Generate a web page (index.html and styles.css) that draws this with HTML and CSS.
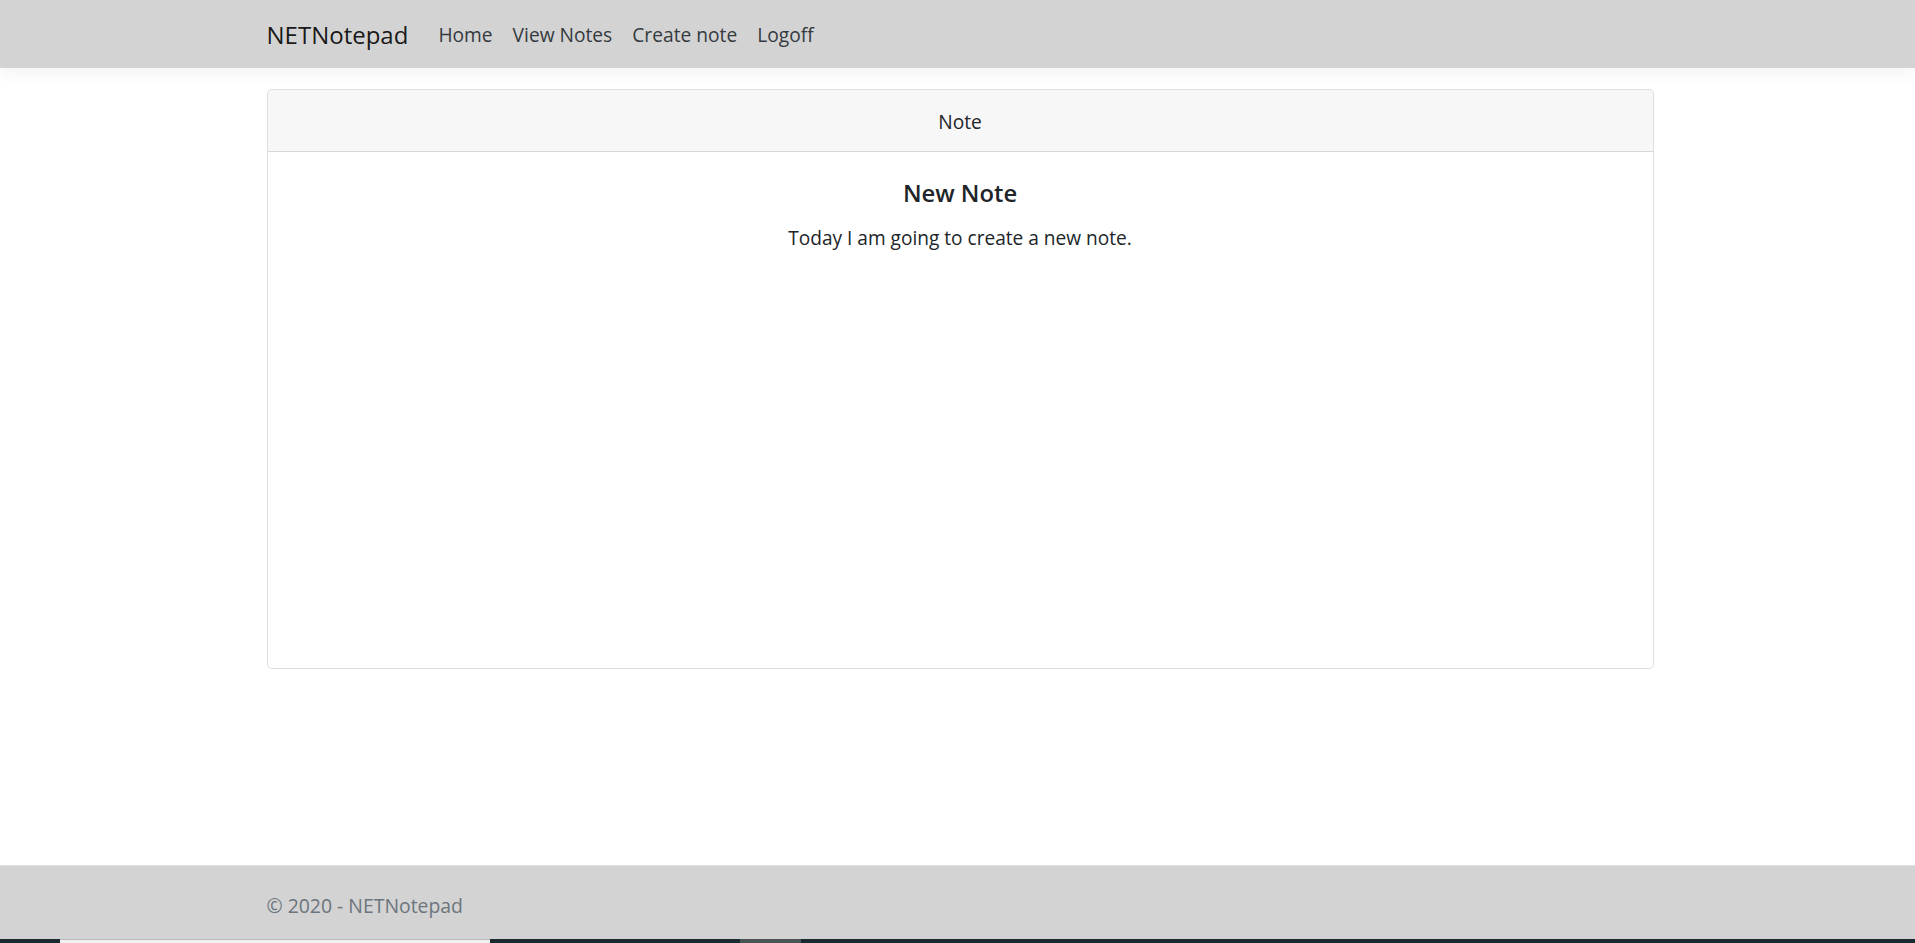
FILE: index.html
```html
<!DOCTYPE html>
<html lang="en">
<head>
<meta charset="utf-8">
<title>NETNotepad</title>
<link rel="stylesheet" href="styles.css">
</head>
<body>
<div class="page">
  <header class="navbar">
    <div class="container nav-inner">
      <a class="brand" href="#">NETNotepad</a>
      <nav class="nav-links">
        <a class="nav-link" href="#">Home</a>
        <a class="nav-link" href="#">View Notes</a>
        <a class="nav-link" href="#">Create note</a>
        <a class="nav-link" href="#">Logoff</a>
      </nav>
    </div>
  </header>
  <main class="main">
    <div class="container">
      <div class="card">
        <div class="card-header">Note</div>
        <div class="card-body">
          <h5 class="card-title">New Note</h5>
          <p class="card-text">Today I am going to create a new note.</p>
        </div>
      </div>
    </div>
  </main>
  <footer class="footer">
    <div class="container footer-text">&copy; 2020 - NETNotepad</div>
  </footer>
  <div class="taskbar">
    <span class="tb tb-dark tb-a"></span>
    <span class="tb tb-light tb-b"></span>
    <span class="tb tb-dark tb-c"></span>
    <span class="tb tb-gray tb-d"></span>
    <span class="tb tb-dark tb-e"></span>
  </div>
</div>
</body>
</html>
```
FILE: styles.css
```css
* { box-sizing: border-box; }
html, body { margin: 0; padding: 0; height: 100%; }
body {
  font-family: "Open Sans", "Noto Sans", "Liberation Sans", sans-serif;
  font-size: 20px;
  color: #212529;
  background: #fff;
}
a { text-decoration: none; }
.page {
  height: 100vh;
  display: flex;
  flex-direction: column;
}
.container {
  width: 1387px;
  margin-left: calc(50% - 691px);
}
.navbar {
  height: 68px;
  background: #d3d3d3;
  box-shadow: 0 5px 15px rgba(0, 0, 0, 0.05);
  flex: none;
  position: relative;
  z-index: 1;
}
.nav-inner {
  display: flex;
  align-items: center;
  height: 100%;
}
.brand {
  font-size: 24px;
  color: rgba(0, 0, 0, 0.9);
  margin-right: 30px;
  padding-top: 1px;
}
.nav-links {
  display: flex;
  gap: 20px;
}
.nav-link {
  color: #343a40;
  font-size: 19.2px;
}
.main {
  flex: 1;
  padding-top: 21px;
}
.card {
  border: 1px solid rgba(0, 0, 0, 0.125);
  border-radius: 5px;
  background: #fff;
  height: 580px;
  display: flex;
  flex-direction: column;
}
.card-header {
  background: rgba(0, 0, 0, 0.03);
  border-bottom: 1px solid rgba(0, 0, 0, 0.125);
  padding: 17px 25px 13px;
  line-height: 30px;
  height: 62px;
  text-align: center;
  font-size: 19.2px;
  border-radius: 4px 4px 0 0;
}
.card-body {
  flex: 1;
  padding: 26px 25px 25px;
  text-align: center;
}
.card-title {
  margin: 0 0 15px;
  font-size: 23.8px;
  font-weight: 600;
  line-height: 30px;
}
.card-text {
  margin: 0;
  font-size: 19.1px;
  line-height: 30px;
}
.footer {
  flex: none;
  height: 74px;
  background: #d3d3d3;
  border-top: 1px solid #dee2e6;
}
.footer-text {
  line-height: 73px;
  padding-top: 3px;
  color: #6c757d;
  font-size: 19.4px;
  white-space: nowrap;
}
.taskbar {
  flex: none;
  height: 4px;
  display: flex;
}
.tb { display: block; height: 100%; }
.tb-dark { background: #1b2a30; }
.tb-light { background: #f0f0f0; border-top: 1px solid #b8b8b8; }
.tb-gray { background: #4a5455; }
.tb-a { width: 60px; }
.tb-b { width: 430px; }
.tb-c { width: 250px; }
.tb-d { width: 61px; }
.tb-e { flex: 1; }
```
